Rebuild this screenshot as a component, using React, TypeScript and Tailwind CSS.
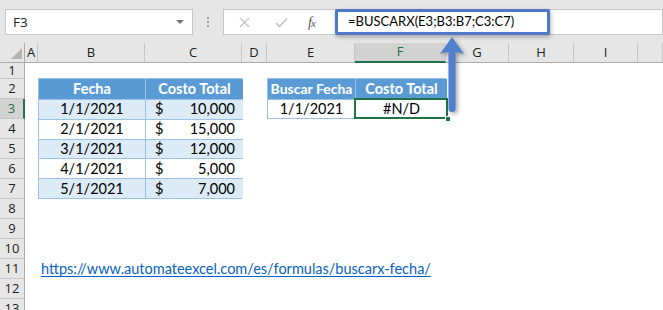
import React from "react"

const colHeaders = [
  { label: "A", cls: "col-start-2" },
  { label: "B", cls: "col-start-3" },
  { label: "C", cls: "col-start-4" },
  { label: "D", cls: "col-start-5" },
  { label: "E", cls: "col-start-6" },
  { label: "F", cls: "col-start-7", active: true },
  { label: "G", cls: "col-start-8" },
  { label: "H", cls: "col-start-9" },
  { label: "I", cls: "col-start-10" },
  { label: "", cls: "col-start-11" },
]

const rowStarts = [
  "row-start-2",
  "row-start-3",
  "row-start-4",
  "row-start-5",
  "row-start-6",
  "row-start-7",
  "row-start-8",
  "row-start-9",
  "row-start-10",
  "row-start-11",
  "row-start-12",
  "row-start-13",
  "row-start-14",
]

const data = [
  { fecha: "1/1/2021", costo: "10,000" },
  { fecha: "2/1/2021", costo: "15,000" },
  { fecha: "3/1/2021", costo: "12,000" },
  { fecha: "4/1/2021", costo: "5,000" },
  { fecha: "5/1/2021", costo: "7,000" },
]

const cellFont = "font-['Lato',_'Liberation_Sans',_sans-serif] text-[14.5px] text-black"

function FormulaBar() {
  return (
    <div className="h-[43px] flex items-start pt-[9px] bg-[#e6e6e6]">
      {/* Name box */}
      <div className="ml-[5px] w-[188px] h-[26px] border border-[#c6c6c6] bg-white flex items-center justify-between pl-[7px] pr-[8px]">
        <span className="font-['Open_Sans',_sans-serif] text-[13.5px] text-[#222]">F3</span>
        <span className="w-0 h-0 border-l-[4px] border-r-[4px] border-t-[4px] border-l-transparent border-r-transparent border-t-[#777]" />
      </div>
      {/* Separator dots */}
      <div className="w-[30px] h-[26px] flex flex-col items-center justify-center gap-[2px]">
        <span className="w-[2px] h-[2px] bg-[#a0a0a0]" />
        <span className="w-[2px] h-[2px] bg-[#a0a0a0]" />
        <span className="w-[2px] h-[2px] bg-[#a0a0a0]" />
      </div>
      {/* Formula box */}
      <div className="flex-1 h-[26px] border border-[#c6c6c6] bg-white flex">
        <div className="w-[111px] h-full flex items-center">
          <svg className="ml-[15px]" width="11" height="11" viewBox="0 0 11 11">
            <path d="M1 1 L10 10 M10 1 L1 10" stroke="#c3c3c3" strokeWidth="1.3" fill="none" />
          </svg>
          <svg className="ml-[25px]" width="13" height="11" viewBox="0 0 13 11">
            <path d="M1 6 L4.5 9.5 L12 1.5" stroke="#c3c3c3" strokeWidth="1.6" fill="none" />
          </svg>
          <span className="ml-[20px] font-['Liberation_Serif',_serif] italic text-[14px] text-[#555] tracking-[-1px]">
            f<span className="text-[11px]">x</span>
          </span>
        </div>
        <div className="-my-px w-[215px] border-[3px] border-[#4f79c6] rounded-[2px] bg-white flex items-center pl-[10px] shadow-[1px_2px_4px_rgba(0,0,0,0.3)]">
          <span className="font-['Lato',_'Liberation_Sans',_sans-serif] text-[13px] text-black">=BUSCARX(E3;B3:B7;C3:C7)</span>
        </div>
      </div>
    </div>
  )
}

function SalesTable() {
  return (
    <div className={`col-start-3 col-span-2 row-start-3 row-span-6 grid grid-cols-[107px_97px] grid-rows-6 border border-[#9bc2e6] -mt-px ${cellFont}`}>
      <div className="bg-[#5b9bd5] text-white font-bold flex items-center justify-center border-r border-[#9bc2e6]">Fecha</div>
      <div className="bg-[#5b9bd5] text-white font-bold flex items-center justify-center">Costo Total</div>
      {data.map((row, i) => {
        const bg = i % 2 === 0 ? "bg-[#ddebf7]" : "bg-white"
        return (
          <React.Fragment key={row.fecha}>
            <div className={`${bg} border-t border-r border-[#9bc2e6] flex items-center justify-center`}>{row.fecha}</div>
            <div className={`${bg} border-t border-[#9bc2e6] flex items-center justify-between pl-[9px] pr-[8px]`}>
              <span>$</span>
              <span>{row.costo}</span>
            </div>
          </React.Fragment>
        )
      })}
    </div>
  )
}

function LookupTable() {
  return (
    <div className={`col-start-6 col-span-2 row-start-3 row-span-2 grid grid-cols-[88px_91px] grid-rows-2 border border-[#9bc2e6] -mt-px ${cellFont}`}>
      <div className="bg-[#5b9bd5] text-white font-bold text-[14px] flex items-center justify-center border-r border-[#9bc2e6]">Buscar Fecha</div>
      <div className="bg-[#5b9bd5] text-white font-bold flex items-center justify-center">Costo Total</div>
      <div className="bg-white border-t border-r border-[#9bc2e6] flex items-center justify-center">1/1/2021</div>
      <div className="bg-white border-t border-[#9bc2e6] flex items-center justify-center relative">
        #N/D
        <div className="absolute -top-[2px] -left-[2px] -right-[1px] -bottom-[1px] border-2 border-[#217346]" />
        <div className="absolute -right-[4px] -bottom-[4px] w-[6px] h-[6px] bg-[#217346] border border-white" />
      </div>
    </div>
  )
}

export default function App() {
  return (
    <div className="w-[663px] h-[310px] overflow-hidden bg-white relative">
      <FormulaBar />
      <div className="grid grid-cols-[25px_13px_107px_97px_25px_88px_91px_63px_65px_64px_1fr] grid-rows-[20px_16px_repeat(12,20px)] bg-white">
        {/* Select-all corner */}
        <div className="col-start-1 row-start-1 bg-[#e6e6e6] border-r border-b border-[#ababab] flex items-end justify-end pr-[2px] pb-[3px]">
          <svg width="11" height="11" viewBox="0 0 11 11">
            <polygon points="11,0 11,11 0,11" fill="#b4b4b4" />
          </svg>
        </div>
        {/* Column headers */}
        {colHeaders.map((c) => (
          <div
            key={c.cls}
            className={`${c.cls} row-start-1 flex items-center justify-center font-['Open_Sans',_sans-serif] text-[13px] ${
              c.active
                ? "bg-[#d2d2d2] text-[#217346] border-b-2 border-[#217346] border-r border-r-[#c6c6c6]"
                : "bg-[#e6e6e6] text-[#222] border-b border-[#ababab] border-r border-r-[#c6c6c6]"
            }`}
          >
            {c.label}
          </div>
        ))}
        {/* Row headers */}
        {rowStarts.map((r, i) => {
          const active = i === 2
          return (
            <div
              key={r}
              className={`col-start-1 ${r} flex items-center justify-center font-['Open_Sans',_sans-serif] text-[13px] border-b border-b-[#c6c6c6] ${
                active
                  ? "bg-[#d2d2d2] text-[#217346] border-r-2 border-r-[#217346]"
                  : "bg-[#e6e6e6] text-[#222] border-r border-r-[#ababab]"
              }`}
            >
              {i + 1}
            </div>
          )
        })}
        <SalesTable />
        <LookupTable />
        {/* Link in B11 */}
        <div className={`col-start-3 col-span-8 row-start-12 flex items-center pl-[3px] ${cellFont}`}>
          <span className="text-[#0563c1] underline underline-offset-2">https://www.automateexcel.com/es/formulas/buscarx-fecha/</span>
        </div>
      </div>
      {/* Arrow pointing from F3 up to the formula */}
      <svg
        className="absolute left-[436px] top-[34px] drop-shadow-[2px_2px_2px_rgba(0,0,0,0.35)]"
        width="32"
        height="82"
        viewBox="0 0 32 82"
      >
        <rect x="12.5" y="17" width="7" height="61" rx="3.5" fill="#5180cc" />
        <path d="M16 3 L28 20 Q22 17.5 16 18 Q10 17.5 4 20 Z" fill="#5180cc" />
      </svg>
    </div>
  )
}
